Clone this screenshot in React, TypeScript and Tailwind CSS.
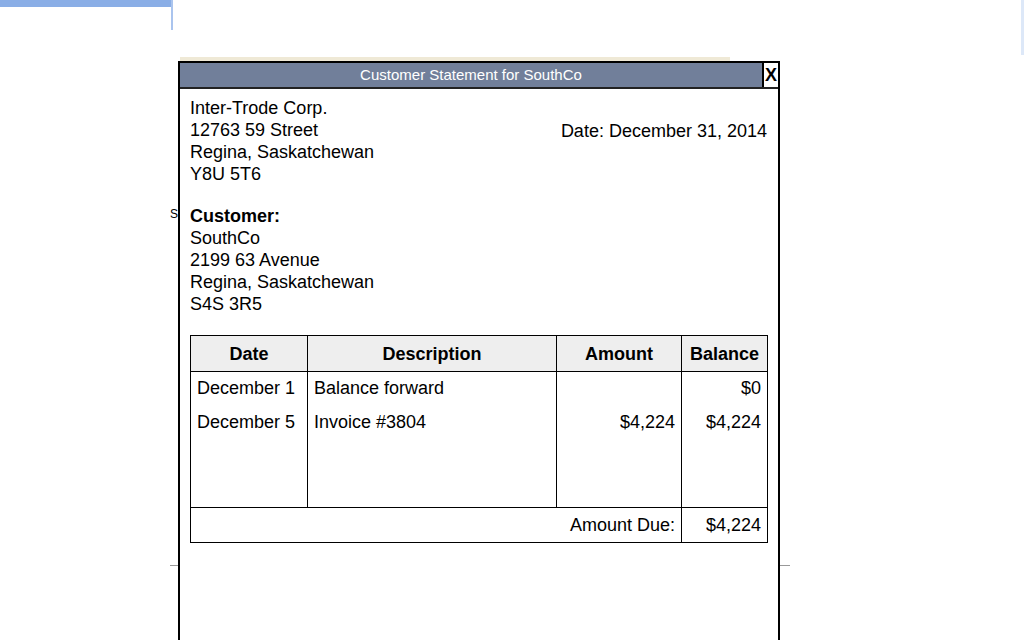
export default function App() {
  return (
    <div className="relative w-[1024px] h-[640px] bg-white overflow-hidden text-black" style={{ fontFamily: '"Liberation Sans", Arial, sans-serif' }}>
      <div className="absolute left-0 top-0 w-[172px] h-[7px] bg-[#8aaee6]" />
      <div className="absolute left-[171px] top-0 w-[2px] h-[30px] bg-[#aac4ee]" />
      <div className="absolute left-[1021px] top-0 w-[3px] h-[55px] bg-[#dde8f8]" />
      <div className="absolute left-[170px] top-[565px] w-[8px] h-px bg-[#999]" />
      <div className="absolute left-[780px] top-[565px] w-[10px] h-px bg-[#999]" />
      <div className="absolute left-[170px] top-[205px] text-[12px]">S</div>
      <div className="absolute left-[180px] top-[57px] w-[550px] h-[4px] bg-[#efe9d6]" />
      <div className="absolute left-[178px] top-[61px] w-[602px] h-[600px] border-2 border-black bg-white flex flex-col">
        <div className="flex h-[26px] bg-[#717f9a] border-b-2 border-[#222]">
          <div className="flex-1 text-center text-white text-[15px] leading-[24px]">Customer Statement for SouthCo</div>
          <div className="w-[16px] bg-white border-l-2 border-black text-[18px] font-bold leading-[24px] text-center">X</div>
        </div>
        <div className="px-[10px] pt-[8px] text-[18px] leading-[22px]">
          <div className="flex justify-between">
            <div>
              <div>Inter-Trode Corp.</div>
              <div>12763 59 Street</div>
              <div>Regina, Saskatchewan</div>
              <div>Y8U 5T6</div>
            </div>
            <div className="pt-[23px] pr-[1px]">Date: December 31, 2014</div>
          </div>
          <div className="mt-[20px]">
            <div className="font-bold">Customer:</div>
            <div>SouthCo</div>
            <div>2199 63 Avenue</div>
            <div>Regina, Saskatchewan</div>
            <div>S4S 3R5</div>
          </div>
          <div className="mt-[20px] w-[578px] border border-black">
            <div className="grid grid-cols-[117px_249px_125px_1fr] h-[36px] bg-[#eeeeee] border-b border-black font-bold">
              <div className="flex items-center justify-center border-r border-black">Date</div>
              <div className="flex items-center justify-center border-r border-black">Description</div>
              <div className="flex items-center justify-center border-r border-black">Amount</div>
              <div className="flex items-center justify-center">Balance</div>
            </div>
            <div className="grid grid-cols-[117px_249px_125px_1fr] h-[136px] border-b border-black">
              <div className="border-r border-black px-[6px] pt-[5px] space-y-[12px]"><div>December 1</div><div>December 5</div></div>
              <div className="border-r border-black px-[6px] pt-[5px] space-y-[12px]"><div>Balance forward</div><div>Invoice #3804</div></div>
              <div className="border-r border-black px-[6px] pt-[5px] space-y-[12px] text-right"><div>&nbsp;</div><div>$4,224</div></div>
              <div className="px-[6px] pt-[5px] space-y-[12px] text-right"><div>$0</div><div>$4,224</div></div>
            </div>
            <div className="grid grid-cols-[491px_1fr] h-[34px]">
              <div className="border-r border-black flex items-center justify-end px-[6px]">Amount Due:</div>
              <div className="flex items-center justify-end px-[6px]">$4,224</div>
            </div>
          </div>
        </div>
      </div>
    </div>
  );
}
